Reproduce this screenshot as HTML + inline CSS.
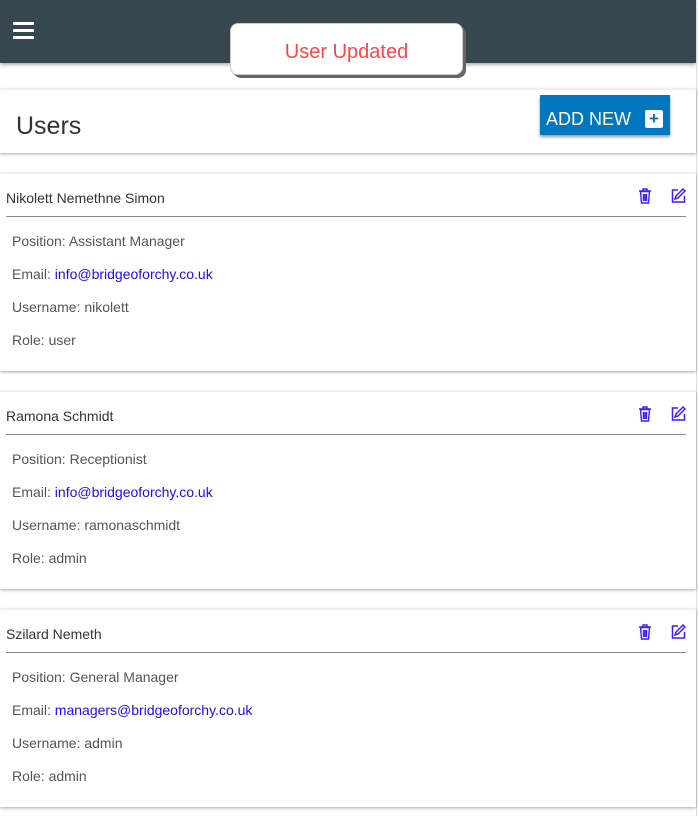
<!DOCTYPE html>
<html><head><style>
body{margin:0;width:699px;height:816px;background:#fff;font-family:"Liberation Sans",sans-serif;position:relative;overflow:hidden}
.hdr{position:absolute;left:0;top:0;width:696px;height:63px;background:#37474f;box-shadow:0 2px 3px rgba(0,0,0,.3)}
.vl{position:absolute;left:696px;top:0;width:1px;height:816px;background:#ddd}
.burger{position:absolute;left:13px;top:22px;width:21px}
.burger i{display:block;height:3px;background:#fff;margin-bottom:4px;border-radius:1px}
.toast{position:absolute;left:230px;top:23px;width:231px;height:50px;background:#fff;border-radius:8px;border:1px solid #ccc;box-shadow:3px 3px 0 #666;color:#f44;font-size:20px;text-align:center;line-height:56px}
.card{position:absolute;left:0;width:696px;background:#fff;box-shadow:0 1px 3px rgba(0,0,0,.35);border-top:1px solid #eee}
.title{position:absolute;left:16px;top:22px;font-size:25px;color:#333}
.btn{position:absolute;left:540px;top:5px;width:130px;height:40px;background:#0277bd;box-shadow:0 2px 3px rgba(0,0,0,.4);color:#fff;font-size:18px;line-height:48px;padding-left:6px;box-sizing:border-box}
.plus{position:absolute;right:7px;top:15px;width:18px;height:18px;background:#fff;border-radius:2px;color:#0277bd;font-size:17px;line-height:18px;text-align:center;font-weight:bold}
.name{position:absolute;left:6px;top:16px;font-size:14px;color:#333}
.line{position:absolute;left:6px;right:10px;top:42px;height:1px;background:#888}
.row{position:absolute;left:12px;font-size:14px;color:#555}
.row a{color:#1a0dff;text-decoration:none}
.ic{position:absolute;top:14px}
</style></head><body>
<div class="hdr"><div class="burger"><i></i><i></i><i></i></div></div>
<div class="vl"></div>
<div class="toast">User Updated</div>
<div class="card" style="top:89px;height:63px"><div class="title">Users</div><div class="btn">ADD NEW<div class="plus">+</div></div></div>

<div class="card" style="top:173px;height:197px">
<div class="name">Nikolett Nemethne Simon</div>
<svg class="ic" style="left:638px" width="14" height="16" viewBox="0 0 14 16"><path d="M1 3h12M5 3V1h4v2M2.5 3.5l1 11.5h7l1-11.5z M5.5 6v7M7 6v7M8.5 6v7" fill="none" stroke="#3b1dff" stroke-width="1.4"/></svg>
<svg class="ic" style="left:671px" width="15" height="15" viewBox="0 0 15 15"><path d="M7 2H1.5v12h12V8M12 1l2 2-7 7-3 1 1-3z" fill="none" stroke="#3b1dff" stroke-width="1.5"/></svg>
<div class="line"></div>
<div class="row" style="top:59px">Position: Assistant Manager</div>
<div class="row" style="top:92px">Email: <a>info@bridgeoforchy.co.uk</a></div>
<div class="row" style="top:125px">Username: nikolett</div>
<div class="row" style="top:158px">Role: user</div>
</div>

<div class="card" style="top:391px;height:197px">
<div class="name">Ramona Schmidt</div>
<svg class="ic" style="left:638px" width="14" height="16" viewBox="0 0 14 16"><path d="M1 3h12M5 3V1h4v2M2.5 3.5l1 11.5h7l1-11.5z M5.5 6v7M7 6v7M8.5 6v7" fill="none" stroke="#3b1dff" stroke-width="1.4"/></svg>
<svg class="ic" style="left:671px" width="15" height="15" viewBox="0 0 15 15"><path d="M7 2H1.5v12h12V8M12 1l2 2-7 7-3 1 1-3z" fill="none" stroke="#3b1dff" stroke-width="1.5"/></svg>
<div class="line"></div>
<div class="row" style="top:59px">Position: Receptionist</div>
<div class="row" style="top:92px">Email: <a>info@bridgeoforchy.co.uk</a></div>
<div class="row" style="top:125px">Username: ramonaschmidt</div>
<div class="row" style="top:158px">Role: admin</div>
</div>

<div class="card" style="top:609px;height:197px">
<div class="name">Szilard Nemeth</div>
<svg class="ic" style="left:638px" width="14" height="16" viewBox="0 0 14 16"><path d="M1 3h12M5 3V1h4v2M2.5 3.5l1 11.5h7l1-11.5z M5.5 6v7M7 6v7M8.5 6v7" fill="none" stroke="#3b1dff" stroke-width="1.4"/></svg>
<svg class="ic" style="left:671px" width="15" height="15" viewBox="0 0 15 15"><path d="M7 2H1.5v12h12V8M12 1l2 2-7 7-3 1 1-3z" fill="none" stroke="#3b1dff" stroke-width="1.5"/></svg>
<div class="line"></div>
<div class="row" style="top:59px">Position: General Manager</div>
<div class="row" style="top:92px">Email: <a>managers@bridgeoforchy.co.uk</a></div>
<div class="row" style="top:125px">Username: admin</div>
<div class="row" style="top:158px">Role: admin</div>
</div>
</body></html>
